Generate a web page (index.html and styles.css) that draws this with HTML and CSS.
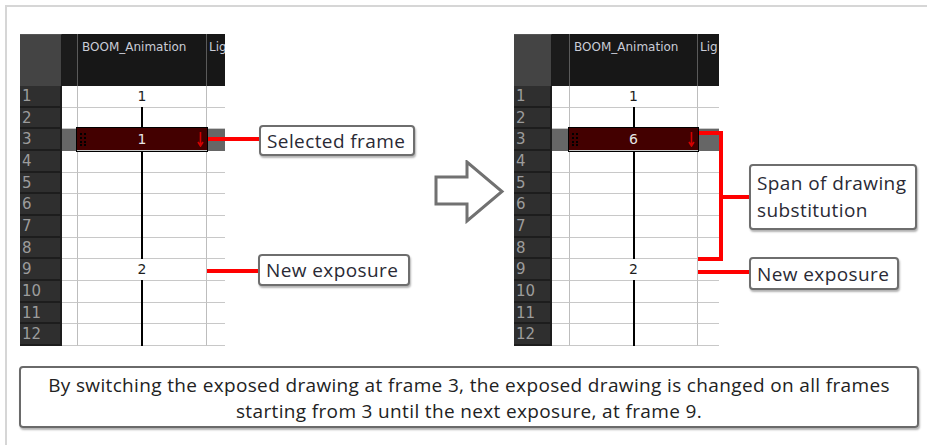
FILE: index.html
```html
<!DOCTYPE html>
<html>
<head>
<meta charset="utf-8">
<link rel="stylesheet" href="styles.css">
</head>
<body>
<div class="page">
  <div class="diagram">
    <div class="panel panel-left">
      <div class="sheet sheet-left">
        <div class="h-num"></div><div class="h-blank"></div><div class="h-layer">BOOM_Animation</div><div class="h-lig">Lig</div>
        <div class="num">1</div><div class="blank"></div><div class="cell">1</div><div class="lig"></div>
        <div class="num">2</div><div class="blank"></div><div class="cell hold"></div><div class="lig"></div>
        <div class="num">3</div><div class="blank sel"></div><div class="cell selcell"><svg class="grip" width="7" height="13" viewBox="0 0 7 13"><g fill="#000"><rect x="0" y="0" width="2" height="2"/><rect x="4" y="0" width="2" height="2"/><rect x="0" y="4" width="2" height="2"/><rect x="4" y="4" width="2" height="2"/><rect x="0" y="8" width="2" height="2"/><rect x="4" y="8" width="2" height="2"/><rect x="0" y="11" width="2" height="2"/><rect x="4" y="11" width="2" height="2"/></g></svg><span>1</span><svg class="down" width="7" height="15" viewBox="0 0 7 15"><path d="M3.5 0V13M1 10L3.5 14L6 10" stroke="#d40000" stroke-width="1.6" fill="none"/></svg></div><div class="lig sel"></div>
        <div class="num">4</div><div class="blank"></div><div class="cell hold"></div><div class="lig"></div>
        <div class="num">5</div><div class="blank"></div><div class="cell hold"></div><div class="lig"></div>
        <div class="num">6</div><div class="blank"></div><div class="cell hold"></div><div class="lig"></div>
        <div class="num">7</div><div class="blank"></div><div class="cell hold"></div><div class="lig"></div>
        <div class="num">8</div><div class="blank"></div><div class="cell hold"></div><div class="lig"></div>
        <div class="num">9</div><div class="blank"></div><div class="cell">2</div><div class="lig"></div>
        <div class="num">10</div><div class="blank"></div><div class="cell hold"></div><div class="lig"></div>
        <div class="num">11</div><div class="blank"></div><div class="cell hold"></div><div class="lig"></div>
        <div class="num">12</div><div class="blank"></div><div class="cell hold"></div><div class="lig"></div>
      </div>
      <div class="wire wl1"></div>
      <div class="wire wl2"></div>
      <div class="callout cl1">Selected frame</div>
      <div class="callout cl2">New exposure</div>
    </div>

    <svg class="arrow" width="71" height="64" viewBox="0 0 71 64">
      <path d="M2 17H33V2L68 31.5L33 61V44H2Z" fill="#fff" stroke="#717171" stroke-width="3" stroke-linejoin="miter"/>
    </svg>

    <div class="panel panel-right">
      <div class="sheet sheet-right">
        <div class="h-num"></div><div class="h-blank"></div><div class="h-layer">BOOM_Animation</div><div class="h-lig">Lig</div>
        <div class="num">1</div><div class="blank"></div><div class="cell">1</div><div class="lig"></div>
        <div class="num">2</div><div class="blank"></div><div class="cell hold"></div><div class="lig"></div>
        <div class="num">3</div><div class="blank sel"></div><div class="cell selcell"><svg class="grip" width="7" height="13" viewBox="0 0 7 13"><g fill="#000"><rect x="0" y="0" width="2" height="2"/><rect x="4" y="0" width="2" height="2"/><rect x="0" y="4" width="2" height="2"/><rect x="4" y="4" width="2" height="2"/><rect x="0" y="8" width="2" height="2"/><rect x="4" y="8" width="2" height="2"/><rect x="0" y="11" width="2" height="2"/><rect x="4" y="11" width="2" height="2"/></g></svg><span>6</span><svg class="down" width="7" height="15" viewBox="0 0 7 15"><path d="M3.5 0V13M1 10L3.5 14L6 10" stroke="#d40000" stroke-width="1.6" fill="none"/></svg></div><div class="lig sel"></div>
        <div class="num">4</div><div class="blank"></div><div class="cell hold"></div><div class="lig"></div>
        <div class="num">5</div><div class="blank"></div><div class="cell hold"></div><div class="lig"></div>
        <div class="num">6</div><div class="blank"></div><div class="cell hold"></div><div class="lig"></div>
        <div class="num">7</div><div class="blank"></div><div class="cell hold"></div><div class="lig"></div>
        <div class="num">8</div><div class="blank"></div><div class="cell hold"></div><div class="lig"></div>
        <div class="num">9</div><div class="blank"></div><div class="cell">2</div><div class="lig"></div>
        <div class="num">10</div><div class="blank"></div><div class="cell hold"></div><div class="lig"></div>
        <div class="num">11</div><div class="blank"></div><div class="cell hold"></div><div class="lig"></div>
        <div class="num">12</div><div class="blank"></div><div class="cell hold"></div><div class="lig"></div>
      </div>
      <div class="bracket"></div>
      <div class="wire wr1"></div>
      <div class="wire wr2"></div>
      <div class="callout cr1">Span of drawing<br>substitution</div>
      <div class="callout cr2">New exposure</div>
    </div>
  </div>

  <div class="caption">By switching the exposed drawing at frame 3, the exposed drawing is changed on all frames<br>starting from 3 until the next exposure, at frame 9.</div>
</div>
</body>
</html>
```

FILE: styles.css
```css
html, body {
  margin: 0;
  padding: 0;
  background: #fff;
}

.page {
  box-sizing: border-box;
  margin: 5px 0 0 5px;
  width: 922px;
  height: 440px;
  border-top: 2px solid #d6d6d6;
  border-left: 2px solid #d6d6d6;
  padding: 27px 0 0 13px;
}

.diagram {
  display: flex;
  align-items: flex-start;
  height: 313px;
}

.panel {
  position: relative;
  height: 313px;
}

.panel-left {
  width: 395px;
}

.panel-right {
  width: 405px;
  margin-left: 9px;
}

.arrow {
  display: block;
  margin: 126px 0 0 19px;
}

/* ---------- exposure sheet ---------- */
.sheet {
  display: grid;
  grid-template-rows: 52px repeat(12, 21.67px);
  font-family: "DejaVu Sans", sans-serif;
  width: 205px;
}

.sheet-left {
  grid-template-columns: 42px 16px 129px 18px;
}

.sheet-right {
  grid-template-columns: 38px 18px 128px 21px;
}

.h-num {
  background: #444;
  border-top: 1px solid #555;
  border-right: 1px solid #1a1a1a;
}

.h-blank {
  background: #1b1b1b;
  border-right: 1px solid #5a5a5a;
}

.h-layer {
  background: #171717;
  border-right: 1px solid #5a5a5a;
  color: #c9ccd6;
  font-size: 12px;
  padding: 6px 0 0 4px;
  white-space: nowrap;
  overflow: hidden;
}

.h-lig {
  background: #171717;
  color: #c9ccd6;
  font-size: 12px;
  padding: 6px 0 0 2px;
  overflow: hidden;
}

.num {
  background: #2f2f2f;
  border-bottom: 2px solid #1d1d1d;
  border-right: 2px solid #1d1d1d;
  color: #9c9c9c;
  font-size: 15px;
  line-height: 20px;
  padding-left: 2px;
  box-sizing: border-box;
}

.blank, .cell, .lig {
  background: #fff;
  border-bottom: 1px solid #c8c8c8;
  box-sizing: border-box;
}

.blank {
  border-right: 1px solid #bdbdbd;
}

.cell {
  border-right: 1px solid #bdbdbd;
  position: relative;
  text-align: center;
  color: #1e1e1e;
  font-size: 14px;
  line-height: 21px;
}

.hold::after {
  content: "";
  position: absolute;
  left: 50%;
  top: -1px;
  bottom: -1px;
  width: 2px;
  margin-left: -1px;
  background: #000;
}

.sel {
  background: #666;
  border-bottom-color: #666;
}

.selcell {
  background: #430000;
  box-shadow: 0 0 0 1px #000;
  margin: -1px 0 0 -1px;
  color: #e6e6e6;
  display: flex;
  align-items: center;
  justify-content: space-between;
  padding: 0 3px 0 3px;
  z-index: 1;
  border-right: none;
}

.grip {
  display: block;
}

.down {
  display: block;
}

/* ---------- callouts ---------- */
.wire {
  position: absolute;
  height: 4px;
  background: #ff0000;
}

.wl1 { left: 187px; top: 103px; width: 52px; }
.wl2 { left: 187px; top: 235px; width: 51px; }
.wr1 { left: 209px; top: 161px; width: 27px; }
.wr2 { left: 184px; top: 236px; width: 52px; }

.bracket {
  position: absolute;
  left: 184px;
  top: 97px;
  width: 21px;
  height: 122px;
  border: 4px solid #ff0000;
  border-left: none;
}

.callout {
  position: absolute;
  box-sizing: border-box;
  border: 2px solid #6e6e6e;
  border-radius: 4px;
  background: #fff;
  box-shadow: 1px 2px 2px rgba(0, 0, 0, 0.3);
  font-family: "Open Sans", sans-serif;
  font-size: 19px;
  letter-spacing: 0.4px;
  color: #2a2a35;
  padding: 0 6px;
  display: flex;
  align-items: center;
  white-space: nowrap;
}

.cl1 { left: 239px; top: 91px; width: 156px; height: 31px; }
.cl2 { left: 238px; top: 220px; width: 152px; height: 32px; }
.cr1 { left: 235px; top: 130px; width: 168px; height: 66px; line-height: 27px; }
.cr2 { left: 235px; top: 223px; width: 150px; height: 33px; }

/* ---------- caption ---------- */
.caption {
  box-sizing: border-box;
  margin: 19px 0 0 -1px;
  width: 900px;
  height: 62px;
  border: 2px solid #6a6a6a;
  border-radius: 4px;
  box-shadow: 1px 2px 2px rgba(0, 0, 0, 0.3);
  font-family: "Open Sans", sans-serif;
  font-size: 19px;
  letter-spacing: 0.35px;
  line-height: 26px;
  color: #222;
  text-align: center;
  padding-top: 4px;
}
```
